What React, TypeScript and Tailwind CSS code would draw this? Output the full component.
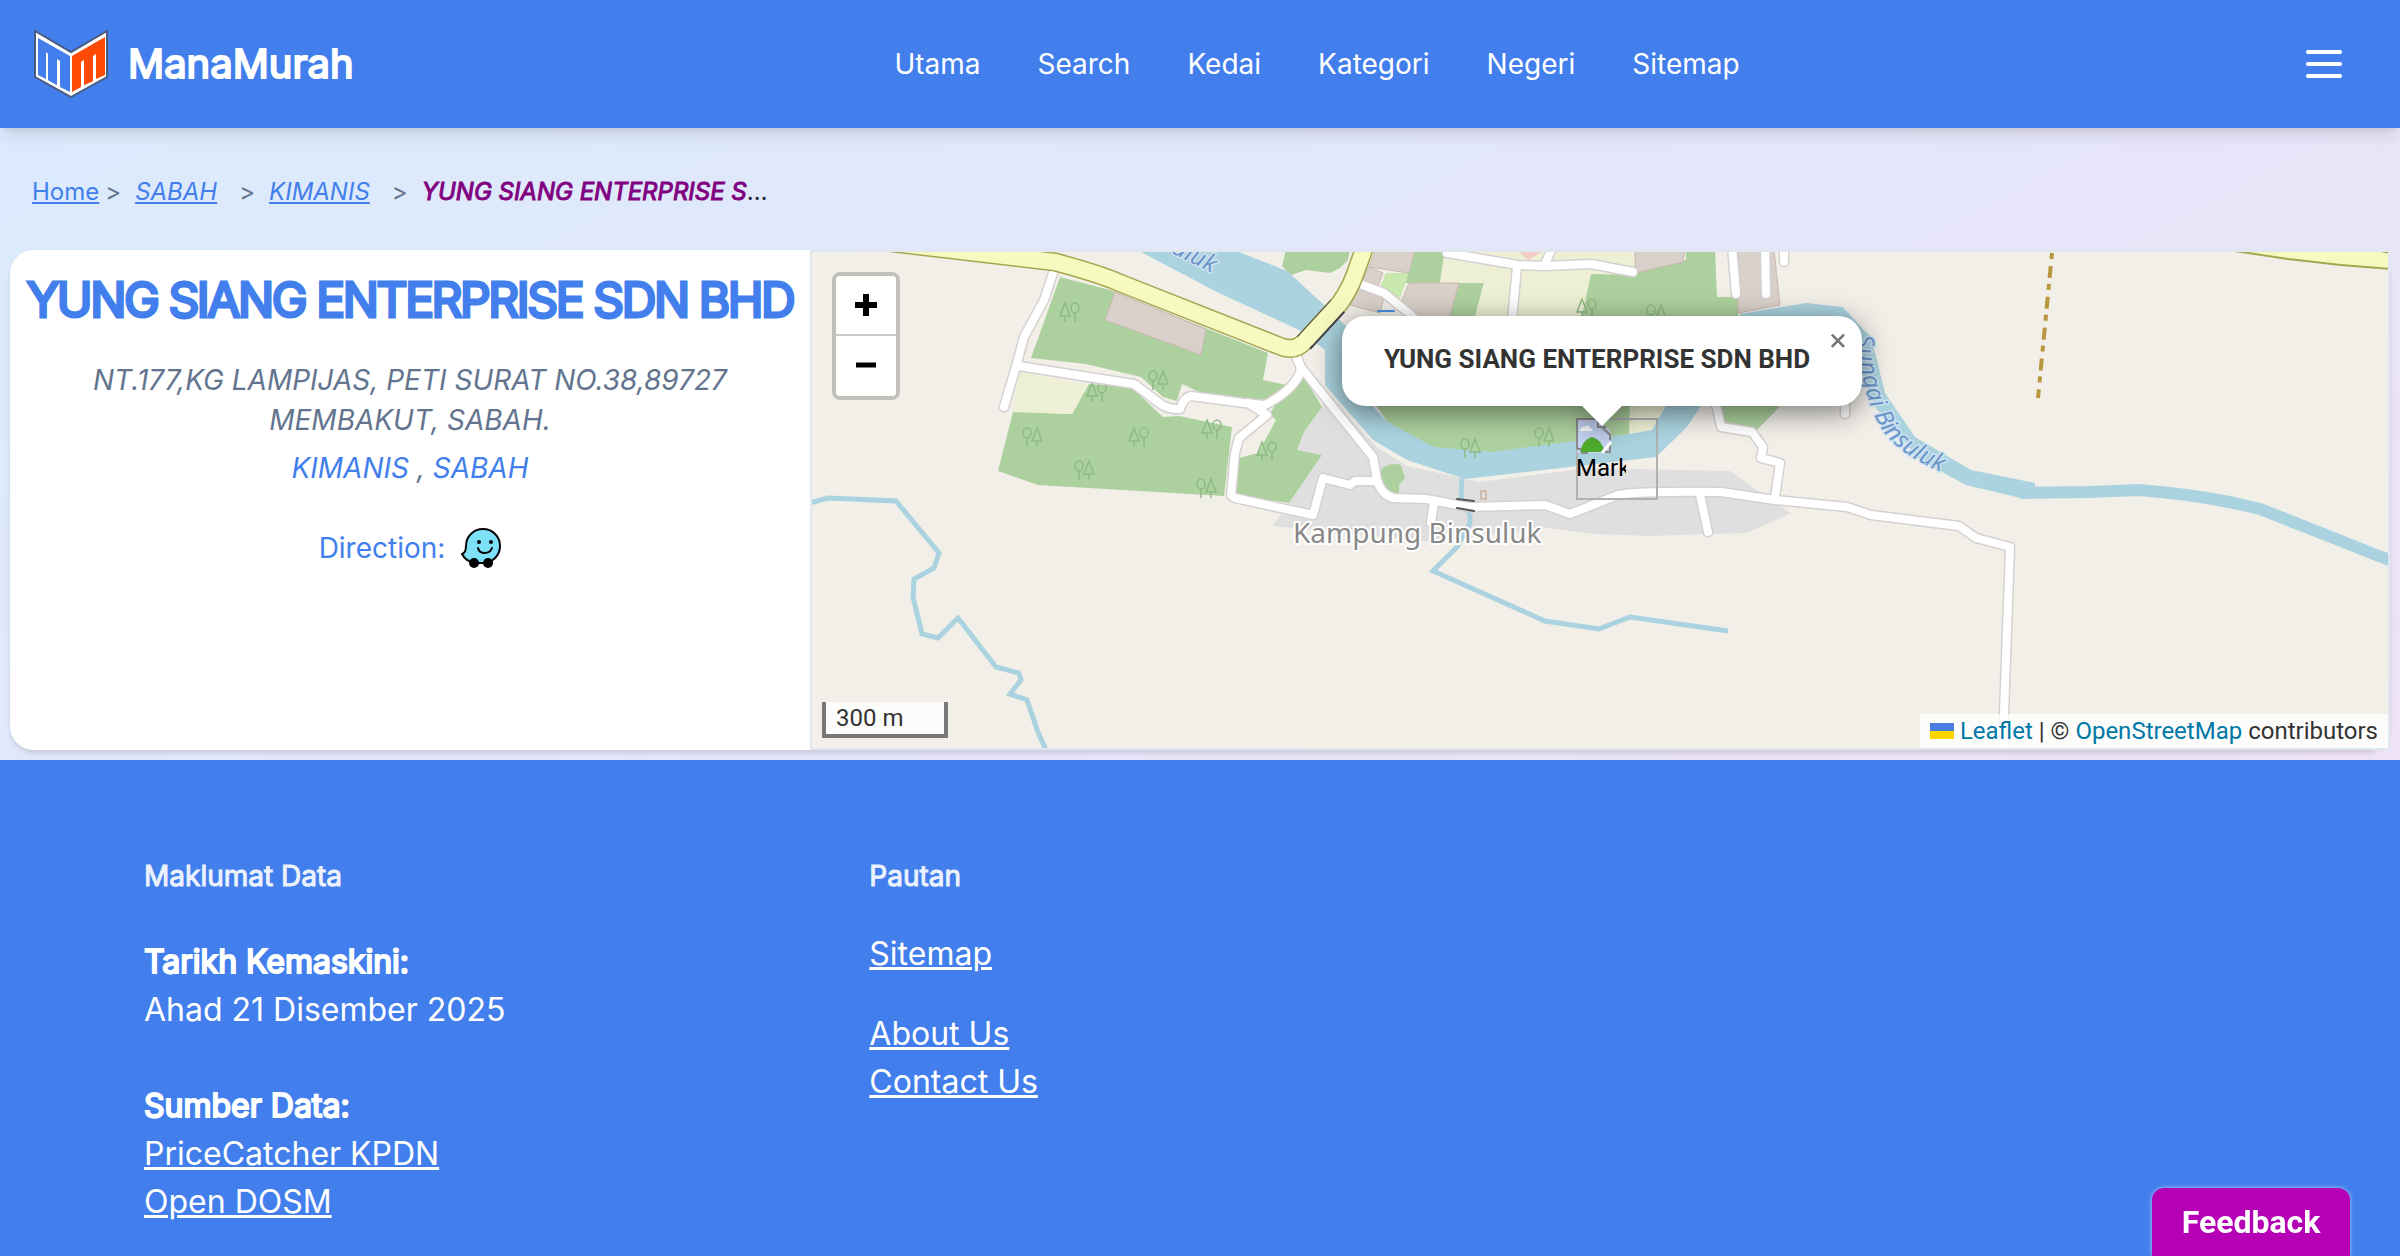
import { useState } from "react";

const navLinks = ["Utama", "Search", "Kedai", "Kategori", "Negeri", "Sitemap"];

const store = {
  name: "YUNG SIANG ENTERPRISE SDN BHD",
  address: "NT.177,KG LAMPIJAS, PETI SURAT NO.38,89727 MEMBAKUT, SABAH.",
  district: "KIMANIS",
  state: "SABAH",
};

// x, y and whether the conifer stands on the left
const trees: [number, number, boolean][] = [
  [1070, 312, true],
  [1158, 380, false],
  [1097, 392, true],
  [1032, 437, false],
  [1139, 437, true],
  [1212, 429, true],
  [1084, 470, false],
  [1206, 488, false],
  [1267, 451, true],
  [1470, 448, false],
  [1544, 437, false],
  [1587, 308, true],
  [1656, 314, false],
];

const minorRoads = [
  "M1053 273L1044 300L1024 337L1017 363L1004 407",
  "M1019 366L1082 376L1134 384L1162 405Q1172 410 1180 409Q1184 397 1191 396L1244 403L1265 405Q1299 387 1301 367L1296 357",
  "M1248 403L1267 415L1239 438L1235 453L1231 495L1235 498L1313 515L1323 478L1350 485L1355 481L1375 481",
  "M1296 353L1300 366L1373 457L1377 480Q1382 496 1394 498L1426 499L1468 507L1545 505L1570 514L1618 495Q1640 491 1721 492L1775 500L1847 507L1871 515L1959 526L1976 538L2010 547L2004 713V752",
  "M1434 503L1431 522",
  "M1700 495L1708 532",
  "M1715 400L1721 427L1752 432L1763 447L1761 458L1780 463L1775 497",
  "M1845 400V414",
  "M1357 283L1384 293L1411 315L1430 335",
  "M1447 253L1518 265L1545 266L1591 264L1633 272",
  "M1545 264L1553 246",
  "M1517 267L1512 320",
  "M1732 246L1736 294",
  "M1765 246L1766 294",
  "M1784 246V262",
];

const mainRoad =
  "M850 238L1055 262Q1100 274 1120 283L1282 347Q1296 352 1306 340L1340 303Q1349 290 1354 277L1363 252L1367 238";

function Logo() {
  return (
    <svg viewBox="0 0 74 68" className="h-[68px] w-[74px]" aria-hidden="true">
      <path d="M1 1L37 22L73 1V47L37 67L1 47Z" fill="#fff" stroke="#475a80" strokeWidth="2" />
      <path d="M4 8L36 26V62L26 57V31L23 29V55L14 50V24L12 22V49L4 45Z" fill="#427fed" />
      <path d="M14 27L23 31V55L14 50Z" fill="#427fed" />
      <path d="M38 26L71 7V45L62 49V24L59 26V51L50 55V30L47 32V57L38 62Z" fill="#ff4a05" />
      <path d="M50 30L59 26V51L50 55Z" fill="#ff4a05" />
    </svg>
  );
}

function WazeIcon() {
  return (
    <svg viewBox="0 0 40 40" className="size-10" aria-hidden="true">
      <path
        d="M22 1C31 1 39 8 39 18C39 28 31 35 22 35H14C8 34 3 30 1 26C4 25 5 23 5 18C5 8 13 1 22 1Z"
        fill="#7ce0f7"
        stroke="#000"
        strokeWidth="2"
      />
      <circle cx="13" cy="35" r="5" />
      <circle cx="27" cy="35" r="5" />
      <circle cx="18" cy="14" r="2" />
      <circle cx="30" cy="14" r="2" />
      <path d="M17 20Q18 25 24 25Q29 25 31 20" fill="none" stroke="#000" strokeWidth="2" strokeLinecap="round" />
    </svg>
  );
}

function Header() {
  return (
    <header className="relative grid h-32 grid-cols-[1fr_auto_1fr] items-center bg-[#427fed] px-8 text-white shadow-lg">
      <a href="#" className="flex items-center gap-5 pl-0.5">
        <Logo />
        <span className="text-[40px] leading-none [-webkit-text-stroke:2px]">ManaMurah</span>
      </a>
      <nav className="flex gap-[57px] pl-[234px] text-[28px]">
        {navLinks.map((label) => (
          <a key={label} href="#">
            {label}
          </a>
        ))}
      </nav>
      <button type="button" aria-label="Menu" className="mr-[26px] flex w-9 flex-col gap-2 justify-self-end">
        <span className="h-1 rounded-full bg-white" />
        <span className="h-1 rounded-full bg-white" />
        <span className="h-1 rounded-full bg-white" />
      </button>
    </header>
  );
}

function Breadcrumb() {
  return (
    <nav aria-label="Breadcrumb" className="px-8 pt-12 pb-[42px] text-2xl leading-8">
      <ol className="flex text-[#427fed]">
        <li>
          <a href="#" className="underline">
            Home
          </a>
        </li>
        <li className="ml-1.5 text-slate-500">&gt;</li>
        <li className="ml-3.5 italic">
          <a href="#" className="underline">
            {store.state}
          </a>
        </li>
        <li className="ml-[22px] text-slate-500">&gt;</li>
        <li className="ml-3.5 italic">
          <a href="#" className="underline">
            {store.district}
          </a>
        </li>
        <li className="ml-[22px] text-slate-500">&gt;</li>
        <li className="ml-3.5 w-[350px] truncate text-slate-800">
          <span className="text-[#800080] italic [-webkit-text-stroke:1px]">{store.name}</span>
        </li>
      </ol>
    </nav>
  );
}

function Tree({ x, y, flip }: { x: number; y: number; flip: boolean }) {
  return (
    <g transform={`translate(${x} ${y}) scale(${flip ? 1 : -1} 1)`} fill="none" stroke="#8dba82" strokeWidth="1.5">
      <path d="M-5 10V4M-10 4L-5 -9L0 4Z" />
      <path d="M5 10V0" />
      <ellipse cx="5" cy="-4" rx="4" ry="5" />
    </g>
  );
}

function MapCanvas() {
  return (
    <svg
      viewBox="812 252 1576 496"
      preserveAspectRatio="xMidYMid slice"
      className="absolute inset-0 h-full w-full"
      role="img"
      aria-label="Map of Kampung Binsuluk"
    >
      <rect x="800" y="240" width="1600" height="520" fill="#f2efe9" />

      {/* residential area */}
      <path
        d="M1322 407L1304 432L1297 450L1322 455L1289 503L1273 526L1434 542L1548 528L1594 534L1648 536L1747 533L1791 513L1759 492L1730 471L1587 468L1480 482L1407 466L1377 447L1327 395Z"
        fill="#e0dfdf"
      />

      {/* woods and fields */}
      <g fill="#add19e">
        <path d="M1060 277L1110 290L1268 353L1263 380L1296 387L1261 403L1199 392L1182 384L1177 401L1163 397L1141 377L1086 364L1031 358Z" />
        <path d="M1013 412L1072 414L1089 384L1131 387L1163 417L1179 416L1232 427L1224 496L1038 485L998 471Z" />
        <path d="M1303 375L1322 407L1304 432L1297 450L1322 455L1289 503L1236 495L1239 458L1258 453L1276 420L1270 415L1277 400Z" />
        <path d="M1286 250L1282 266L1291 275L1306 270L1330 273L1340 268L1348 260L1350 250Z" />
        <path d="M1382 468Q1392 462 1401 465L1405 478L1399 485V495L1384 492L1378 484Z" />
        <path d="M1415 250H1445L1440 283H1484L1474 320H1449L1459 283H1405Z" />
        <path d="M1591 272L1635 273L1686 260V250H1715L1717 297H1738V320H1581Z" />
        <path d="M1373 400H1630V434L1491 453L1434 448L1388 423Z" />
        <path d="M1720 400H1786L1757 430L1725 425Z" />
      </g>
      <g fill="#eef0d5">
        <path d="M1019 372L1088 385L1072 414L1013 412Z" />
        <path d="M1445 250H1633L1635 275L1591 274L1581 320H1474L1484 283H1440Z" />
        <path d="M1630 400H1667L1652 430L1629 434Z" />
      </g>
      <path d="M1386 273H1409L1400 298L1380 287Z" fill="#c8e8ae" />
      <path d="M1517 250H1545L1528 260Z" fill="#f3ccc6" />
      <g fill="#d9d0c9" stroke="#c9b9b0" strokeWidth="1">
        <path d="M1115 292L1206 329L1201 355L1105 320Z" />
        <path d="M1375 250H1415L1409 273L1369 267Z" />
        <path d="M1369 267L1383 273L1377 288L1360 283Z" />
        <path d="M1355 287L1384 297L1380 313L1350 305Z" />
        <path d="M1409 283H1459L1449 320H1420L1402 300Z" />
        <path d="M1635 250H1685L1683 262L1635 273Z" />
        <path d="M1738 250H1774L1780 305L1738 313Z" />
      </g>
      <rect x="1481" y="491" width="5" height="8" fill="none" stroke="#c9b09c" strokeWidth="1.5" />

      {/* water */}
      <g fill="#aad3df">
        <path d="M1137 250L1217 292L1299 330L1325 350V385L1373 440L1407 460L1465 479L1656 457L1687 427L1702 404H1667L1652 430L1629 434L1491 452L1434 447L1388 422L1373 407L1350 330L1323 304L1287 271L1234 250Z" />
        <path d="M1740 314L1806 303L1843 307L1862 328L1871 337L1885 393L1915 437L1971 470L2035 483V489L2025 499L1966 485L1920 460L1875 407L1850 340H1740Z" />
      </g>
      <g fill="none" stroke="#aad3df" strokeWidth="5">
        <path
          d="M2020 493L2089 492L2138 490Q2190 494 2229 502L2260 509L2331 537L2376 555L2390 560"
          strokeWidth="12"
        />
        <path d="M810 503L828 498L896 501L939 553L934 568L914 579L913 597L922 634L938 638L958 618L996 667L1019 673L1021 680L1010 694L1027 700L1038 732L1046 750" />
        <path d="M1462 478L1461 498L1470 515V523L1457 547L1433 571L1545 621L1599 629L1630 617L1728 631" />
      </g>

      {trees.map(([x, y, flip]) => (
        <Tree key={`${x}-${y}`} x={x} y={y} flip={flip} />
      ))}

      {/* roads: casing first, then the surface */}
      <g fill="none" strokeLinecap="round" strokeLinejoin="round">
        <g stroke="#d6d0d0" strokeWidth="11">
          {minorRoads.map((d) => (
            <path key={d} d={d} />
          ))}
        </g>
        <g stroke="#fff" strokeWidth="8">
          {minorRoads.map((d) => (
            <path key={d} d={d} />
          ))}
        </g>
        <path d="M1457 499L1474 501M1457 508L1474 511" stroke="#555" strokeWidth="2" />
        <path d="M1378 311H1394" stroke="#4a90e2" strokeWidth="2" />
        <path d={mainRoad} stroke="#a5a650" strokeWidth="19" />
        <path d="M1304 343L1338 306" stroke="#444" strokeWidth="19" strokeLinecap="butt" />
        <path d={mainRoad} stroke="#f7fabf" strokeWidth="16" />
      </g>
      <path d="M2235 251L2288 259L2341 265L2390 269V253L2376 250Z" fill="#f7fabf" stroke="#a5a650" strokeWidth="2" />
      <path d="M2052 253L2038 398" stroke="#b8963e" strokeWidth="4" strokeDasharray="6 7 12 6" />

      {/* labels */}
      <g fontFamily="'Noto Sans', sans-serif" paintOrder="stroke" strokeLinejoin="round">
        <text x="1293" y="543" fontSize="28" fill="#888" stroke="#fff" strokeWidth="4">
          Kampung Binsuluk
        </text>
        <g fontSize="24" fontStyle="italic" fill="#6b95c9" stroke="#cfe4f3" strokeWidth="3">
          <path id="river-east" d="M1830 290Q1853 305 1858 350Q1864 400 1882 430Q1900 455 1941 472" fill="none" stroke="none" />
          <text textAnchor="end">
            <textPath href="#river-east" startOffset="100%">
              Sungai Binsuluk
            </textPath>
          </text>
          <path id="river-west" d="M1035 186L1212 273" fill="none" stroke="none" />
          <text textAnchor="end">
            <textPath href="#river-west" startOffset="100%">
              Sungai Binsuluk
            </textPath>
          </text>
        </g>
      </g>
    </svg>
  );
}

function BrokenImageIcon() {
  return (
    <svg viewBox="0 0 36 36" className="size-9" aria-hidden="true">
      <path d="M1 1H22L34 13V35H1Z" fill="#c6d5f5" />
      <path d="M4 13Q5 8 9 9Q12 5 14 10Q17 11 16 13Z" fill="#fff" />
      <path d="M4 34Q7 21 16 19Q25 21 29 34Z" fill="#4fae2c" />
      <path d="M1 31V1H22M22 1V9H30M26 9L34 17V22M34 26V34H29M5 35H12M1 31H6" fill="none" stroke="#8b8b8b" strokeWidth="2" />
      <path d="M26 35L35 24" stroke="#fff" strokeWidth="3" />
    </svg>
  );
}

function StoreMap() {
  const [popupOpen, setPopupOpen] = useState(true);

  return (
    <div className="relative min-w-0 flex-1 overflow-hidden border-2 border-[#e1e7ee] font-[Roboto,sans-serif] text-2xl text-[#333]">
      <MapCanvas />

      <div className="absolute top-5 left-5 flex flex-col overflow-hidden rounded-lg border-4 border-black/20 bg-clip-padding">
        <button type="button" aria-label="Zoom in" className="flex size-[60px] items-center justify-center border-b-2 border-[#ccc] bg-white">
          <svg viewBox="0 0 22 22" className="size-[22px]">
            <path d="M11 0V22M0 11H22" stroke="#000" strokeWidth="6" />
          </svg>
        </button>
        <button type="button" aria-label="Zoom out" className="flex size-[60px] items-center justify-center bg-white">
          <svg viewBox="0 0 22 22" className="size-[22px]">
            <path d="M1 10H21" stroke="#000" strokeWidth="5" />
          </svg>
        </button>
      </div>

      <div className="absolute top-[166px] left-[764px] size-[82px] border-2 border-[#b0b0b0]" />
      <div className="absolute top-[166px] left-[764px] h-[82px] w-[50px] overflow-hidden leading-7 text-black">
        <BrokenImageIcon />
        Marker
      </div>

      {popupOpen && (
        <div className="absolute top-16 left-[530px] drop-shadow-[0_6px_14px_rgba(0,0,0,0.5)]">
          <div className="flex h-[90px] w-[520px] items-center rounded-3xl bg-white pb-1 pl-[42px] text-[26px] font-bold whitespace-nowrap">
            {store.name}
          </div>
          <div className="mx-auto h-5 w-10 bg-white [clip-path:polygon(0_0,100%_0,50%_100%)]" />
          <button
            type="button"
            aria-label="Close popup"
            onClick={() => setPopupOpen(false)}
            className="absolute top-0 right-0 size-12 text-[32px] leading-[48px] text-[#757575]"
          >
            ×
          </button>
        </div>
      )}

      <div className="absolute bottom-2.5 left-2.5 h-9 w-[126px] border-4 border-t-0 border-[#777] bg-white/80 px-2.5 leading-8">
        300 m
      </div>
      <div className="absolute right-0 bottom-0 flex h-[34px] items-center gap-1.5 bg-white/80 px-2.5">
        <span className="flex h-4 w-6 flex-col">
          <span className="h-2 bg-[#4c7be1]" />
          <span className="h-2 bg-[#ffd500]" />
        </span>
        <span>
          <a href="#" className="text-[#0078a8]">
            Leaflet
          </a>{" "}
          | ©{" "}
          <a href="#" className="text-[#0078a8]">
            OpenStreetMap
          </a>{" "}
          contributors
        </span>
      </div>
    </div>
  );
}

function StoreCard() {
  return (
    <section className="mx-2.5 mb-2.5 flex h-[500px] rounded-3xl shadow-md">
      <div className="flex w-[800px] shrink-0 flex-col items-center rounded-l-3xl bg-white pt-[22px] text-center text-[28px] leading-10 text-slate-500">
        <h1 className="text-5xl leading-[56px] tracking-tighter whitespace-nowrap text-[#427fed] [-webkit-text-stroke:3px]">
          {store.name}
        </h1>
        <address className="mt-8 px-16">
          {store.address}
          <span className="mt-2 block">
            <a href="#" className="text-[#427fed]">
              {store.district}
            </a>{" "}
            ,{" "}
            <a href="#" className="text-[#427fed]">
              {store.state}
            </a>
          </span>
        </address>
        <a href="#" className="mt-10 flex items-center gap-4 text-[#427fed]">
          Direction: <WazeIcon />
        </a>
      </div>
      <StoreMap />
    </section>
  );
}

function Footer() {
  return (
    <footer className="grid flex-1 grid-cols-3 content-start gap-16 bg-[#427fed] px-36 pt-24 pb-4 text-[32px] leading-[48px] text-white">
      <div>
        <h2 className="text-[28px] leading-10 text-[#ecf2fd] [-webkit-text-stroke:1px]">Maklumat Data</h2>
        <p className="mt-[42px]">
          <strong className="font-normal [-webkit-text-stroke:2px]">Tarikh Kemaskini:</strong>
          <br />
          Ahad 21 Disember 2025
        </p>
        <p className="mt-12">
          <strong className="font-normal [-webkit-text-stroke:2px]">Sumber Data:</strong>
          <br />
          <a href="#" className="underline">
            PriceCatcher KPDN
          </a>
          <br />
          <a href="#" className="underline">
            Open DOSM
          </a>
        </p>
      </div>
      <div>
        <h2 className="text-[28px] leading-10 text-[#ecf2fd] [-webkit-text-stroke:1px]">Pautan</h2>
        <ul className="mt-[34px]">
          <li>
            <a href="#" className="underline">
              Sitemap
            </a>
          </li>
          <li className="mt-8">
            <a href="#" className="underline">
              About Us
            </a>
          </li>
          <li>
            <a href="#" className="underline">
              Contact Us
            </a>
          </li>
        </ul>
      </div>
    </footer>
  );
}

export default function App() {
  return (
    <div className="flex min-h-screen flex-col bg-linear-to-br from-[#d9ebfd] to-[#f3e0f5] font-[Inter,sans-serif]">
      <Header />
      <main>
        <Breadcrumb />
        <StoreCard />
      </main>
      <Footer />
      <button
        type="button"
        className="fixed right-[50px] bottom-0 h-[68px] w-[198px] rounded-t-xl bg-[#b500b5] font-[Roboto,sans-serif] text-[32px] font-bold text-white shadow-[0_0_4px_rgba(255,255,255,0.6)]"
      >
        Feedback
      </button>
    </div>
  );
}
